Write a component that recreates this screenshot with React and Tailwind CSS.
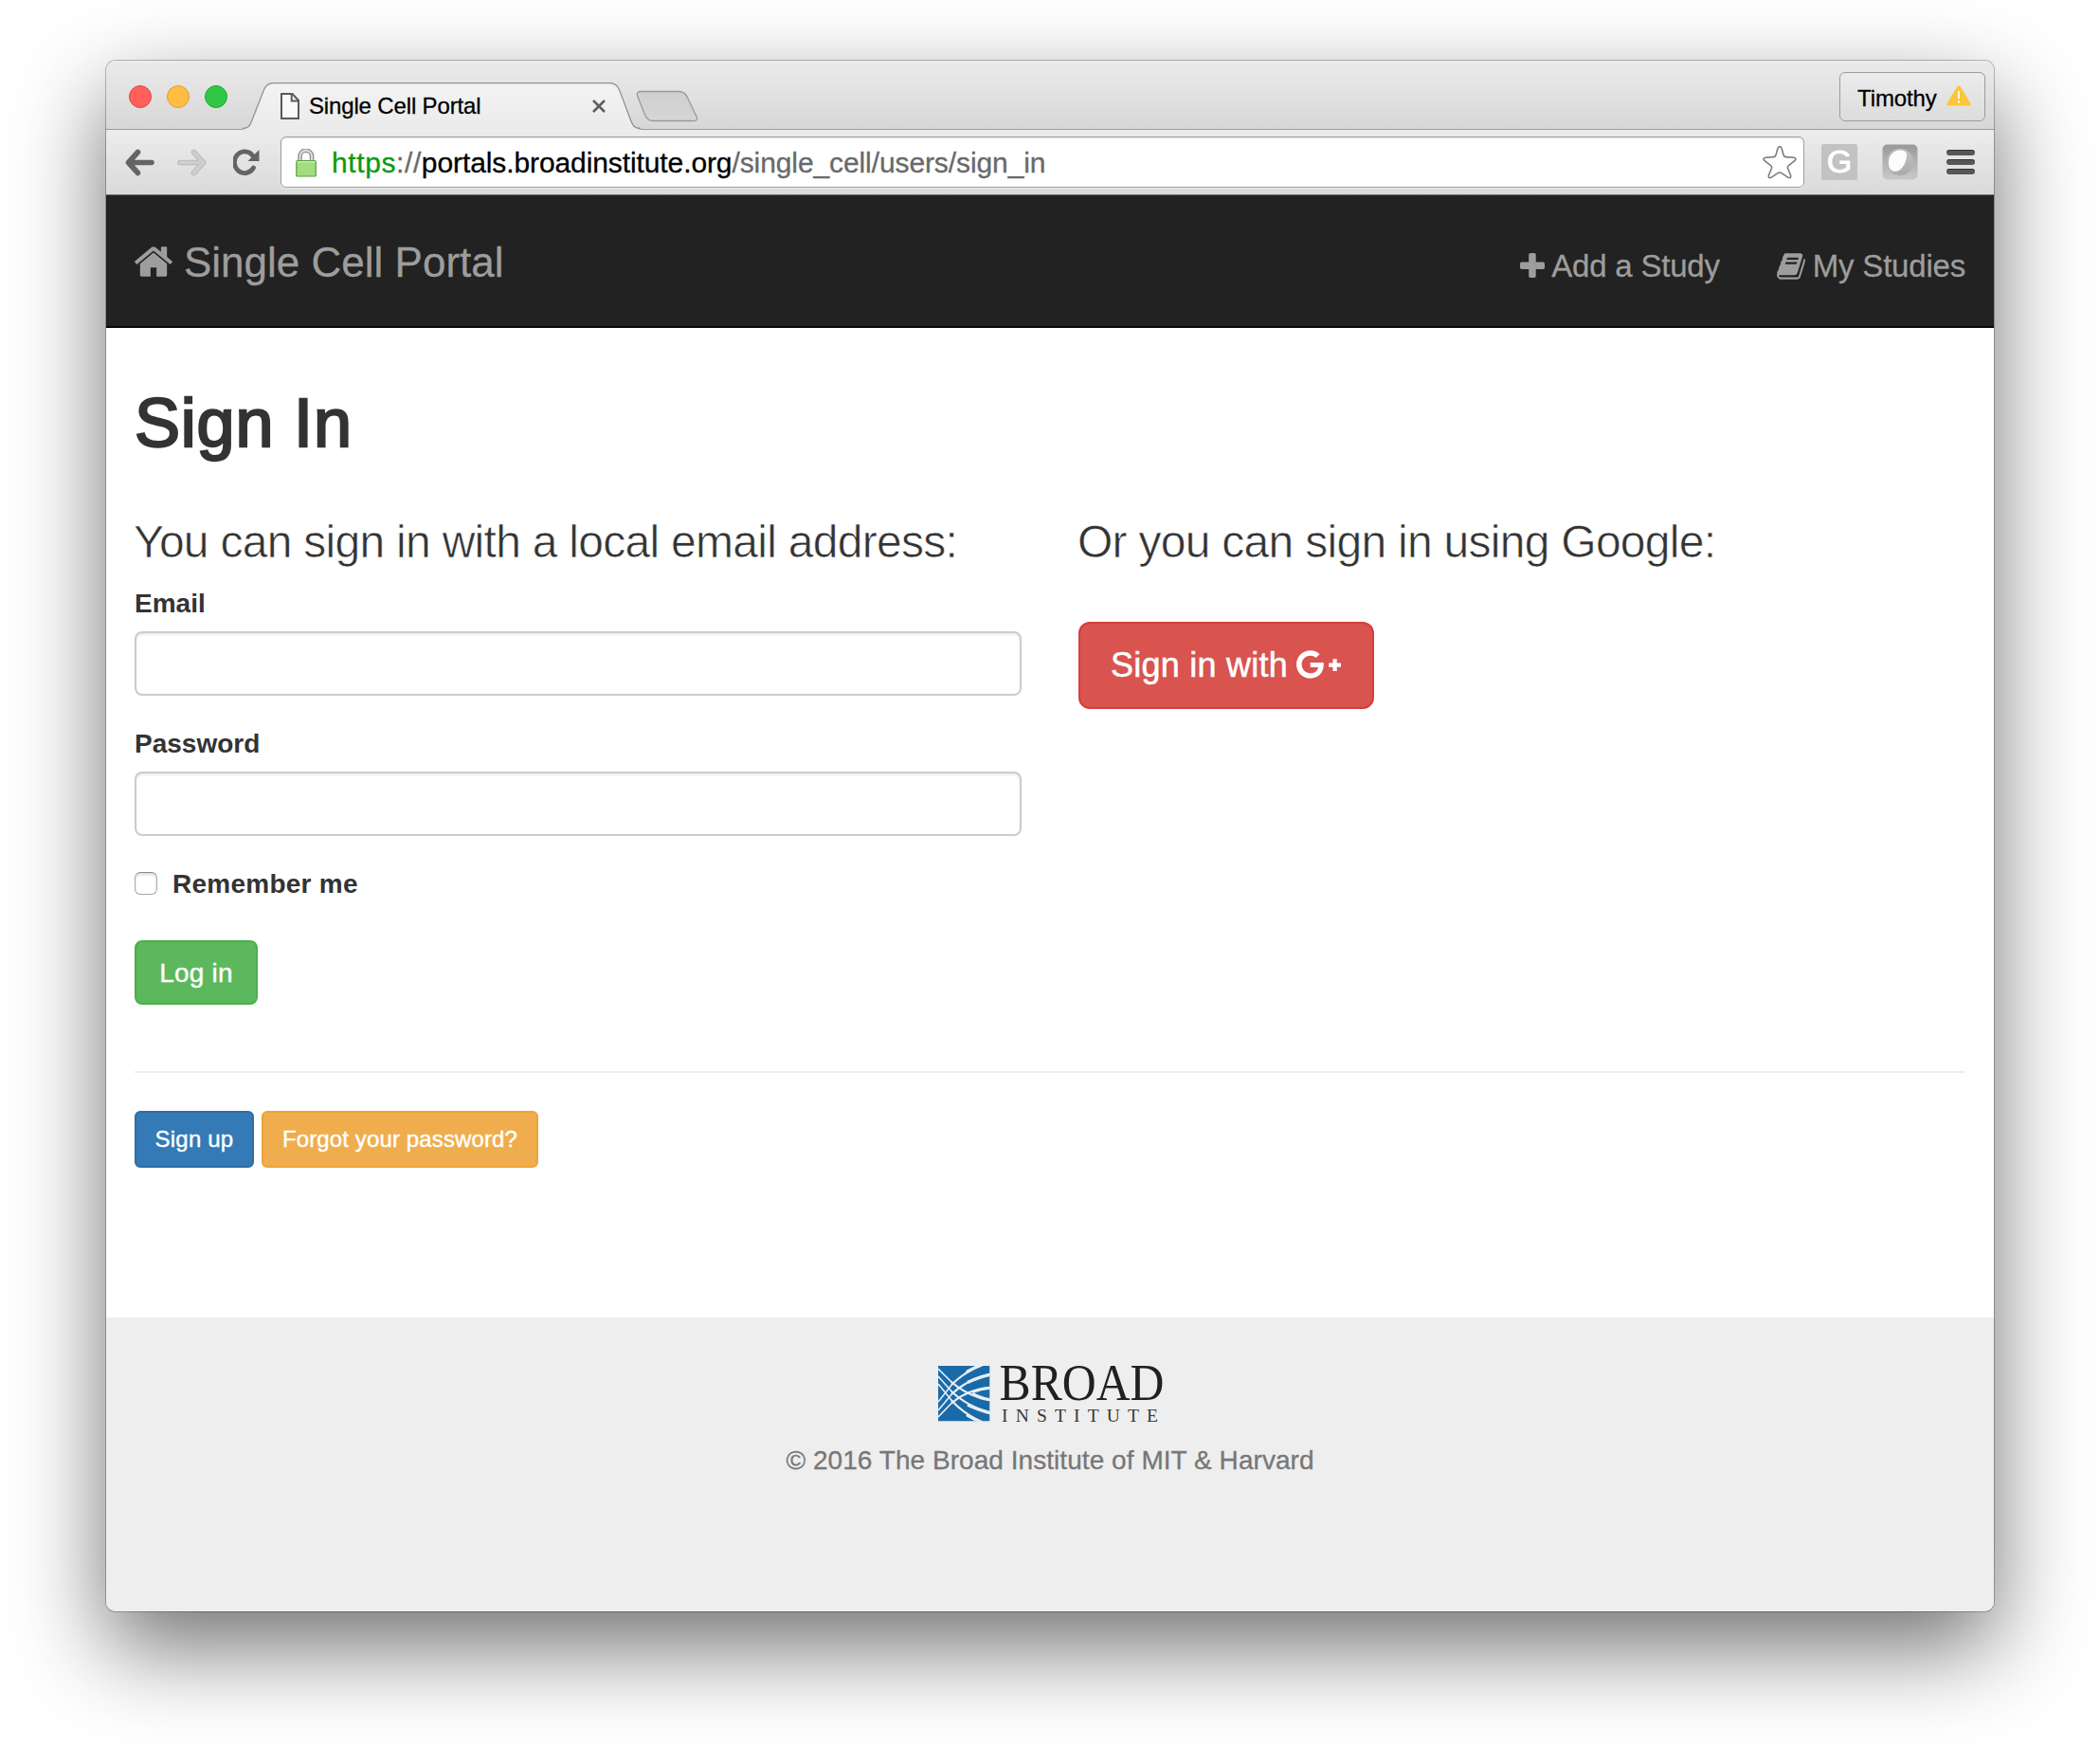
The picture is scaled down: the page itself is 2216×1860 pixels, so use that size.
import React from "react";

function TabShape() {
  return (
    <svg className="absolute inset-0" width="420" height="50" viewBox="0 0 420 50">
      <defs>
        <linearGradient id="tabFill" x1="0" y1="0" x2="0" y2="1">
          <stop offset="0" stopColor="#f3f3f3" />
          <stop offset="1" stopColor="#ebebeb" />
        </linearGradient>
      </defs>
      <path
        d="M0 50 V49.5 C6 49 7.500 46 9.500 41 L22 9 C24 3 27 0.500 33 0.500 H387 C393 0.500 396 3 398 9 L410 41 C412 46 413.500 49 420 49.500 V50 Z"
        fill="url(#tabFill)"
      />
      <path
        d="M0 48.500 C6 48 7.500 46 9.500 41 L22 9 C24 3 27 0.500 33 0.500 H387 C393 0.500 396 3 398 9 L410 41 C412 46 413.500 48 420 48.500"
        fill="none"
        stroke="#929292"
        strokeWidth="1.3"
      />
    </svg>
  );
}

function NewTab() {
  return (
    <svg className="mt-[31px]" width="66" height="34" viewBox="0 0 66 34">
      <defs>
        <linearGradient id="newTab" x1="0" y1="0" x2="0" y2="1">
          <stop offset="0" stopColor="#cfcfcf" />
          <stop offset="1" stopColor="#d6d6d6" />
        </linearGradient>
      </defs>
      <path
        d="M5 1.500 H45 Q52 1.500 54.500 8 L64 28 Q66 32.500 61 32.500 H18 Q12 32.500 9.500 26 L1.500 6 Q0.500 1.500 5 1.500 Z"
        fill="url(#newTab)"
        stroke="#9a9a9a"
        strokeWidth="1.300"
      />
    </svg>
  );
}

function FileIcon() {
  return (
    <svg width="20" height="28" viewBox="0 0 20 28">
      <path d="M1 1 H12.500 L19 8 V27 H1 Z" fill="#fafafa" stroke="#5a5a5a" strokeWidth="2" />
      <path d="M11.700 1 V8.500 H19" fill="none" stroke="#5a5a5a" strokeWidth="2" />
    </svg>
  );
}

function TitleBar() {
  return (
    <div className="flex h-[73px] border-b border-[#999999] bg-linear-to-b from-[#ebebeb] to-[#d7d7d7] pl-6">
      <div className="mt-[26px] flex gap-4">
        <div className="size-6 rounded-full border border-[#e2463f] bg-[#ff605c]" />
        <div className="size-6 rounded-full border border-[#dfa023] bg-[#ffbd44]" />
        <div className="size-6 rounded-full border border-[#1aab29] bg-[#33c748]" />
      </div>
      <div className="relative mt-[23px] ml-4 flex h-[50px] w-[420px]">
        <TabShape />
        <div className="relative flex w-full">
          <div className="mt-[11px] ml-10">
            <FileIcon />
          </div>
          <span className="mt-[10px] ml-[10px] text-[24px] leading-[30px] tracking-[-0.15px] text-black [-webkit-text-stroke:0.3px_#000]">
            Single Cell Portal
          </span>
          <svg className="mt-[18px] ml-auto mr-[37px]" width="14" height="14" viewBox="0 0 14 14">
            <path d="M1 1 L13 13 M13 1 L1 13" stroke="#5e5e5e" strokeWidth="2.600" />
          </svg>
        </div>
      </div>
      <div className="-ml-[5px]">
        <NewTab />
      </div>
      <div className="mt-3 mr-[9px] ml-auto flex h-[52px] w-[154px] rounded-[6px] border border-[#9b9b9b] bg-linear-to-b from-[#ececec] to-[#dcdcdc]">
        <span className="mt-3 ml-[18px] text-[24px] leading-[30px] tracking-[-0.1px] text-black [-webkit-text-stroke:0.3px_#000]">
          Timothy
        </span>
        <svg className="mt-[13px] ml-[10px]" width="26" height="22" viewBox="0 0 26 22">
          <path d="M11.500 1 Q13 -0.500 14.500 1 L25.600 19.500 Q26 21.500 24 21.500 H2 Q0 21.500 0.400 19.500 Z" fill="#ffc538" />
          <path d="M13 6 V14 M13 16 V18.500" stroke="#fff" strokeWidth="2" />
        </svg>
      </div>
    </div>
  );
}

function Toolbar() {
  return (
    <div className="flex h-[69px] border-b border-[#737373] bg-linear-to-b from-[#ececec] to-[#dadada] pl-5">
      <svg className="mt-[20px]" width="31" height="29" viewBox="0 0 31 29">
        <path d="M13.500 3.500 L3.500 14.500 L13.500 25.500 M4 14.500 H28" fill="none" stroke="#646464" strokeWidth="5.600" strokeLinecap="round" strokeLinejoin="round" />
      </svg>
      <svg className="mt-[20px] ml-6" width="31" height="29" viewBox="0 0 31 29">
        <path d="M17.500 3.500 L27.500 14.500 L17.500 25.500 M27 14.500 H3" fill="none" stroke="#bababa" strokeWidth="5.600" strokeLinecap="round" strokeLinejoin="round" />
        <path d="M17.500 3.500 L27.500 14.500 L17.500 25.500 M27 14.500 H3" fill="none" stroke="#cfcfcf" strokeWidth="3.600" strokeLinecap="round" strokeLinejoin="round" />
      </svg>
      <svg className="mt-[20px] ml-[28px]" width="28" height="29" viewBox="0 0 28 29">
        <path d="M21.500 20 A10.800 11.300 0 1 1 20.500 7" fill="none" stroke="#646464" strokeWidth="4.800" strokeLinecap="round" />
        <path d="M27.500 1 V13 H15.500 Z" fill="#646464" />
      </svg>
      <div className="mt-[7px] ml-[22px] flex h-[54px] w-[1608px] rounded-[6px] border border-[#9c9c9c] bg-white shadow-[inset_0_2px_1px_rgba(0,0,0,0.06),0_1px_0_rgba(255,255,255,0.5)]">
        <svg className="mt-[12px] ml-[14px]" width="24" height="30" viewBox="0 0 24 30">
          <path d="M5.500 13 V8 A6.300 6.300 0 0 1 18.100 8 V13" fill="none" stroke="#8a8a8a" strokeWidth="4.600" />
          <path d="M5.500 13 V8 A6.300 6.300 0 0 1 18.100 8 V13" fill="none" stroke="#dcdcdc" strokeWidth="2.200" />
          <rect x="1.800" y="12.500" width="20.500" height="16.500" rx="1" fill="#a5dc80" stroke="#57a043" strokeWidth="1.200" />
          <path d="M2.500 13.700 H21.600" stroke="#c2f0a2" strokeWidth="1.400" />
        </svg>
        <span className="mt-[7px] ml-[15px] text-[30px] leading-[40px] tracking-[-0.1px] whitespace-nowrap text-[#696969] [-webkit-text-stroke:0.3px_currentColor]">
          <span className="tracking-[0.6px]">
            <span className="text-[#0b9a12]">https</span>://
          </span>
          <span className="text-black">portals.broadinstitute.org</span>
          /single_cell/users/sign_in
        </span>
        <svg className="mt-[8px] mr-[7px] ml-auto" width="36" height="36" viewBox="0 0 36 36">
          <path
            d="M16 3.300 Q18 0 20 3.300 L22 10.500 Q22.500 12.500 24.500 12.600 L33 13.200 Q36.500 14 33.800 16.700 L27.500 21.500 Q26 22.800 26.500 24.600 L29.600 32 Q30.300 35.600 27 34.300 L20 29.600 Q18 28.300 16 29.600 L9 34.300 Q5.700 35.600 6.400 32 L9.500 24.600 Q10 22.800 8.500 21.500 L2.200 16.700 Q-0.500 14 3 13.200 L11.500 12.600 Q13.500 12.500 14 10.500 Z"
            fill="#fff"
            stroke="#7d7d7d"
            strokeWidth="1.600"
          />
        </svg>
      </div>
      <div className="mt-[15px] ml-[18px] flex size-[38px] items-center justify-center rounded-[2px] bg-[#c2c2c2]">
        <span className="relative -top-px text-[34px] leading-[38px] text-white [-webkit-text-stroke:1px_#fff]">G</span>
      </div>
      <svg className="mt-[15px] ml-[26px]" width="38" height="38" viewBox="0 0 38 38">
        <defs>
          <linearGradient id="ballBox" x1="0" y1="0" x2="0" y2="1">
            <stop offset="0" stopColor="#999" />
            <stop offset="1" stopColor="#c9c9c9" />
          </linearGradient>
          <linearGradient id="ball" x1="0" y1="0" x2="0" y2="1">
            <stop offset="0" stopColor="#c4c4c4" />
            <stop offset="1" stopColor="#aaa" />
          </linearGradient>
        </defs>
        <rect x="0.500" y="0.500" width="37" height="37" rx="5" fill="url(#ballBox)" />
        <circle cx="19" cy="19" r="14" fill="url(#ball)" stroke="#b5b5b5" />
        <path d="M7 22 C6 14 11 6.500 19 6.500 C23 6.500 26 8 26 12 C26 20 20 29 14 29 C10 29 7.500 26 7 22 Z" fill="#fcfcfc" />
      </svg>
      <div className="mt-[21px] ml-[30px] flex flex-col gap-1">
        <div className="h-1.5 w-[30px] rounded-[3px] border-t border-[#333] bg-[#575757]" />
        <div className="h-1.5 w-[30px] rounded-[3px] border-t border-[#333] bg-[#575757]" />
        <div className="h-1.5 w-[30px] rounded-[3px] border-t border-[#333] bg-[#575757]" />
      </div>
    </div>
  );
}

function HomeIcon() {
  return (
    <svg width="40" height="32" viewBox="20 253 1624 1283" fill="currentColor">
      <path d="M1408 992v480q0 26-19 45t-45 19h-384v-384h-256v384h-384q-26 0-45-19t-19-45v-480q0-1 .5-3t.5-3l575-474 575 474q1 2 1 6zm223-69l-62 74q-8 9-21 11h-3q-13 0-21-7l-692-577-692 577q-12 8-24 7-13-2-21-11l-62-74q-8-10-7-23.500t11-21.500l719-599q32-26 76-26t76 26l244 204v-195q0-14 9-23t23-9h192q14 0 23 9t9 23v408l219 182q10 8 11 21.500t-7 23.500z" />
    </svg>
  );
}

function BookIcon() {
  return (
    <svg width="30" height="28" viewBox="0 128 1664 1536" fill="currentColor">
      <path d="M1639 478q40 57 18 129l-275 906q-19 64-76.500 107.500t-122.500 43.500h-923q-77 0-148.500-53.500t-99.500-131.500q-24-67-2-127 0-4 3-27t4-37q1-8-3-21.500t-3-19.500q2-11 8-21t16.500-23.500 16.500-23.500q23-38 45-91.500t30-91.500q3-10 .5-30t-.5-28q3-11 17-28t17-23q21-36 42-92t25-90q1-9-2.500-32t.5-28q4-13 22-30.500t22-22.500q19-26 42.500-84.500t27.500-96.500q1-8-3-25.500t-2-26.500q2-8 9-18t18-23 17-21q8-12 16.500-30.500t15-35 16-36 19.500-32 26.500-23.500 36-11.500 47.500 5.500l-1 3q38-9 51-9h761q74 0 114 56t18 130l-274 906q-36 119-71.500 153.500t-128.500 34.500h-869q-27 0-38 15-11 16-1 43 24 70 144 70h923q29 0 56-15.500t35-41.500l300-987q7-22 5-57 38 15 59 43zm-1064 2q-4 13 2 22.500t20 9.500h608q13 0 25.500-9.500t16.500-22.500l21-64q4-13-2-22.500t-20-9.500h-608q-13 0-25.500 9.500t-16.500 22.500zm-83 256q-4 13 2 22.500t20 9.500h608q13 0 25.500-9.500t16.500-22.500l21-64q4-13-2-22.500t-20-9.500h-608q-13 0-25.500 9.500t-16.500 22.500z" />
    </svg>
  );
}

function Navbar() {
  return (
    <nav className="flex h-[140px] justify-between border-b-2 border-[#080808] bg-[#222222] px-[30px] text-[#9d9d9d]">
      <a className="mt-[49px] flex h-[44px] text-[44px] leading-[44px] [-webkit-text-stroke:0.3px_#9d9d9d]">
        <span className="mt-[5px] mr-[12px]">
          <HomeIcon />
        </span>
        Single Cell Portal
      </a>
      <div className="mt-[59px] flex h-8 gap-[60px] text-[33px] leading-[32px] tracking-[-0.2px] [-webkit-text-stroke:0.3px_#9d9d9d]">
        <a className="flex">
          <svg className="mt-[2px] mr-[7px]" width="26" height="26" viewBox="0 0 26 26" fill="currentColor">
            <rect x="0" y="9.500" width="26" height="7.500" rx="1.700" />
            <rect x="9.200" y="0" width="7.500" height="26" rx="1.700" />
          </svg>
          Add a Study
        </a>
        <a className="flex">
          <span className="mt-[2px] mr-[8px]">
            <BookIcon />
          </span>
          My Studies
        </a>
      </div>
    </nav>
  );
}

function Field({ label, type }) {
  return (
    <label className="block">
      <span className="block pt-px text-[28px] leading-[39px] font-bold">{label}</span>
      <input
        type={type}
        className="mt-2.5 block h-[68px] w-full rounded-[8px] border-2 border-[#cccccc] bg-white px-6 shadow-[inset_0_2px_2px_rgba(0,0,0,0.075)]"
      />
    </label>
  );
}

function SignIn() {
  return (
    <main className="h-[1044px] bg-white px-[30px] pt-[61px] text-[#333333]">
      <h1 className="h-20 text-[72px] leading-[79px] tracking-[0.8px] [-webkit-text-stroke:2.4px_#333]">Sign In</h1>
      <div className="mt-[58px] flex gap-[60px]">
        <form className="w-[936px]">
          <h3 className="-ml-px mb-[19px] h-[52px] text-[48px] leading-[54px] tracking-[-0.72px] whitespace-nowrap [-webkit-text-stroke:0.6px_#fff]">
            You can sign in with a local email address:
          </h3>
          <div className="flex flex-col gap-[30px]">
            <Field label="Email" type="email" />
            <Field label="Password" type="password" />
            <div className="flex h-10">
              <span className="mt-2 size-6 rounded-[6px] border border-[#a9a9a9] border-t-[#8c8c8c] bg-white shadow-[inset_0_2px_3px_rgba(0,0,0,0.15)]" />
              <span className="ml-[16px] pt-px text-[28px] leading-[40px] font-bold tracking-[0.25px]">Remember me</span>
            </div>
          </div>
          <button className="mt-10 flex h-[68px] w-[130px] items-center justify-center rounded-[8px] border-2 border-[#4cae4c] bg-[#5cb85c] text-[28px] tracking-[0.2px] text-white [-webkit-text-stroke:0.4px_#fff]">
            <span className="pt-px">Log in</span>
          </button>
        </form>
        <section>
          <h3 className="-ml-px mb-[59px] h-[52px] text-[48px] leading-[54px] tracking-[-0.72px] whitespace-nowrap [-webkit-text-stroke:0.6px_#fff]">
            Or you can sign in using Google:
          </h3>
          <button className="flex h-[92px] w-[312px] items-center justify-center gap-[9px] rounded-[12px] border-2 border-[#d43f3a] bg-[#d9534f] text-[36px] text-white">
            <span className="-ml-px tracking-[0.25px] [-webkit-text-stroke:0.5px_#fff]">Sign in with</span>
            <svg className="-mt-0.5" width="47" height="30" viewBox="12.800 64 614.400 384" fill="currentColor">
              <path d="M386.061 228.496c1.834 9.692 3.143 19.384 3.143 31.956C389.204 370.205 315.599 448 204.800 448c-106.084 0-192-85.915-192-192s85.916-192 192-192c51.864 0 95.083 18.859 128.611 50.292l-52.126 50.030c-14.145-13.621-39.028-29.599-76.485-29.599-65.484 0-118.920 54.221-118.920 121.277 0 67.056 53.436 121.277 118.920 121.277 75.961 0 104.513-54.745 108.965-82.773H204.800v-66.009h181.261zm185.406 6.437V179.200h-56.001v55.733h-55.733v56.001h55.733v55.733h56.001v-55.733H627.200v-56.001h-55.733z" />
            </svg>
          </button>
        </section>
      </div>
      <hr className="mt-[70px] border-t-2 border-[#eeeeee]" />
      <div className="mt-10 flex gap-2 text-[24px] text-white [-webkit-text-stroke:0.4px_#fff]">
        <button className="flex h-[60px] w-[126px] items-center justify-center rounded-[6px] border-2 border-[#2e6da4] bg-[#337ab7] tracking-[0.2px]">
          Sign up
        </button>
        <button className="flex h-[60px] w-[292px] items-center justify-center rounded-[6px] border-2 border-[#eea236] bg-[#f0ad4e] tracking-[0.12px]">
          Forgot your password?
        </button>
      </div>
    </main>
  );
}

function BroadLogo() {
  return (
    <svg className="ml-1 overflow-visible" width="240" height="62" viewBox="0 0 240 62">
      <defs>
        <clipPath id="mark">
          <rect x="0" y="1" width="54.500" height="58.500" />
        </clipPath>
      </defs>
      <g clipPath="url(#mark)">
        <rect x="0" y="1" width="54.500" height="58.500" fill="#1a6aa8" />
        <g fill="none" stroke="#e6eef4">
          <g strokeWidth="1.600">
            <path d="M0 39 L15.500 19.500" />
            <path d="M0 48 L15.500 29.500" />
            <path d="M0 55 L15.500 39" />
            <path d="M0 4 L15.500 19.500" />
            <path d="M0 12 L15.500 29.500" />
            <path d="M0 20 L15.500 39" />
          </g>
          <g strokeWidth="2.200">
            <path d="M14 21 Q27 8 46 -0.500" />
            <path d="M14 31 Q31 15 56 9.500" />
            <path d="M14 40.500 Q32 25 56 24" />
            <path d="M14 18 Q32 34 56 37" />
            <path d="M14 28 Q31 44 56 51" />
            <path d="M14 37.500 Q27 51.500 46 60.500" />
          </g>
          <g strokeWidth="3.400">
            <path d="M30 7.500 Q38 3 47 -0.500" />
            <path d="M31 18.500 Q42 13 56 10" />
            <path d="M36 28.500 Q45 25 56 24" />
            <path d="M36 30.500 Q45 35.500 56 37" />
            <path d="M31 42 Q42 47.500 56 51" />
            <path d="M30 52.500 Q38 57.500 47 61" />
          </g>
        </g>
      </g>
      <text x="64.500" y="37" fontFamily="Liberation Serif, serif" fontSize="54" fill="#231f20" textLength="174" lengthAdjust="spacingAndGlyphs">BROAD</text>
      <text x="67" y="59.500" fontFamily="Liberation Serif, serif" fontSize="19.500" fill="#3a3637" textLength="165">INSTITUTE</text>
    </svg>
  );
}

function Footer() {
  return (
    <footer className="flex h-[310px] flex-col items-center bg-[#eeeeee] pt-[50px] text-[#777777]">
      <BroadLogo />
      <p className="mt-[19px] text-[28px] leading-[40px] tracking-[0.05px] [-webkit-text-stroke:0.3px_#777]">
        © 2016 The Broad Institute of MIT &amp; Harvard
      </p>
    </footer>
  );
}

export default function App() {
  return (
    <div className="h-[1860px] w-[2216px] overflow-hidden bg-white px-[112px] pt-16 font-['Liberation_Sans',Arial,sans-serif]">
      <div className="h-[1636px] w-[1992px] rounded-[10px] shadow-[0_0_0_1px_rgba(0,0,0,0.25),0_38px_96px_rgba(0,0,0,0.56)]">
        <div className="overflow-hidden rounded-[10px]">
          <TitleBar />
          <Toolbar />
          <Navbar />
          <SignIn />
          <Footer />
        </div>
      </div>
    </div>
  );
}
